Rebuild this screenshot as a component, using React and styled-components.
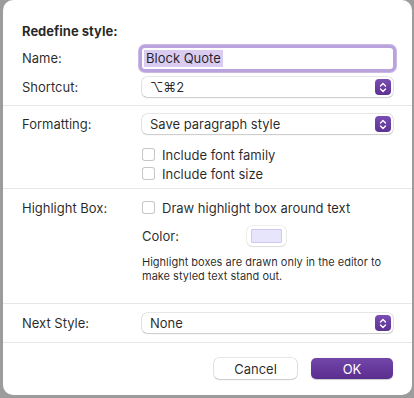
import React from "react";
import styled, { createGlobalStyle } from "styled-components";

const GlobalStyle = createGlobalStyle`
  html, body {
    margin: 0;
    padding: 0;
    background: #9c9c9c;
    font-family: Inter, "Liberation Sans", sans-serif;
    -webkit-font-smoothing: antialiased;
  }
  * { box-sizing: border-box; }
`;

const Backdrop = styled.div`
  width: 414px;
  height: 398px;
  padding: 0 2px 0 3px;
  background: #9c9c9c;
`;

const Dialog = styled.div`
  width: 409px;
  height: 395px;
  background: #ffffff;
  border-radius: 10px;
  display: flex;
  flex-direction: column;
  color: rgba(0, 0, 0, 0.85);
  font-size: 13px;
  overflow: hidden;
`;

const Section = styled.div`
  padding: ${(p) => p.$pad || "0"};
  padding-left: 19px;
  padding-right: 19px;
  display: flex;
  flex-direction: column;
  border-bottom: ${(p) => (p.$last ? "none" : "1px solid #e6e6e6")};
`;

const Title = styled.div`
  height: 20px;
  line-height: 20px;
  font-weight: 700;
  margin-bottom: 4px;
`;

const Row = styled.div`
  display: grid;
  grid-template-columns: 120px 251px;
  align-items: center;
  height: ${(p) => p.$h || 20}px;
  margin-top: ${(p) => p.$mt || 0}px;
`;

const Label = styled.div`
  line-height: 16px;
`;

const TextField = styled.div`
  height: 21px;
  width: 251px;
  background: #fff;
  border-radius: 3px;
  box-shadow: 0 0 0 3px #baa3dd, 0 0 0 4px #c9b8e6;
  padding: 0 2px;
  display: flex;
  align-items: center;
`;

const Selected = styled.span`
  background: #d9ccf0;
  line-height: 17px;
  padding: 0 2px;
`;

const Popup = styled.div`
  height: 20px;
  width: 251px;
  background: #fff;
  border-radius: 5px;
  box-shadow: 0 0 0 0.5px rgba(0, 0, 0, 0.2), 0 1px 1.5px rgba(0, 0, 0, 0.12);
  display: flex;
  align-items: center;
  justify-content: space-between;
  padding: 0 2px 0 8px;
`;

const Stepper = styled.div`
  width: 16px;
  height: 16px;
  border-radius: 4px;
  background: linear-gradient(#7a4db3, #5e3194);
  display: flex;
  align-items: center;
  justify-content: center;
`;

const CheckRow = styled.div`
  display: flex;
  align-items: center;
  gap: 7px;
`;

const Box = styled.span`
  width: 13px;
  height: 13px;
  border-radius: 3px;
  background: #fff;
  box-shadow: inset 0 0 0 1px #c6c6c6;
`;

const ColorRow = styled.div`
  display: grid;
  grid-template-columns: 105px auto;
  align-items: center;
`;

const Swatch = styled.div`
  width: 39px;
  height: 20px;
  border-radius: 5px;
  background: #fff;
  box-shadow: 0 0 0 0.5px rgba(0, 0, 0, 0.12), 0 1px 1.5px rgba(0, 0, 0, 0.08);
  padding: 3px 4px;
`;

const SwatchFill = styled.div`
  width: 100%;
  height: 100%;
  border-radius: 2px;
  background: ${(p) => p.$color};
  box-shadow: inset 0 0 0 0.5px rgba(80, 70, 200, 0.35);
`;

const Help = styled.div`
  margin-left: 120px;
  margin-top: 9px;
  width: 242px;
  font-size: 11px;
  line-height: 14px;
  color: rgba(0, 0, 0, 0.85);
`;

const Footer = styled.div`
  display: flex;
  justify-content: flex-end;
  gap: 14px;
  padding: 15px 19px 0 0;
`;

const Button = styled.button`
  width: ${(p) => p.$w}px;
  height: 21px;
  border: none;
  border-radius: 5px;
  font-family: inherit;
  font-size: 13px;
  padding: 0;
  color: ${(p) => (p.$primary ? "#fff" : "rgba(0,0,0,0.85)")};
  background: ${(p) => (p.$primary ? "linear-gradient(#7147a9, #5b2d8f)" : "#fff")};
  box-shadow: ${(p) =>
    p.$primary
      ? "0 0.5px 1px rgba(0,0,0,0.2)"
      : "0 0 0 0.5px rgba(0,0,0,0.2), 0 1px 1.5px rgba(0,0,0,0.12)"};
`;

function Chevrons() {
  return (
    <svg width="8" height="11" viewBox="0 0 8 11" fill="none">
      <path d="M1.5 4 L4 1.5 L6.5 4" stroke="#fff" strokeWidth="1.4" strokeLinecap="round" strokeLinejoin="round" />
      <path d="M1.5 7 L4 9.5 L6.5 7" stroke="#fff" strokeWidth="1.4" strokeLinecap="round" strokeLinejoin="round" />
    </svg>
  );
}

function PopupButton({ value }) {
  return (
    <Popup>
      <span>{value}</span>
      <Stepper>
        <Chevrons />
      </Stepper>
    </Popup>
  );
}

function Check({ text }) {
  return (
    <CheckRow>
      <Box />
      <span>{text}</span>
    </CheckRow>
  );
}

export default function App() {
  return (
    <Backdrop>
      <GlobalStyle />
      <Dialog>
        <Section $pad="21px 0 8px">
          <Title>Redefine style:</Title>
          <Row $h={26}>
            <Label>Name:</Label>
            <TextField>
              <Selected>Block Quote</Selected>
            </TextField>
          </Row>
          <Row $mt={6}>
            <Label>Shortcut:</Label>
            <PopupButton value="⌥⌘2" />
          </Row>
        </Section>

        <Section $pad="8px 0 5px">
          <Row>
            <Label>Formatting:</Label>
            <PopupButton value="Save paragraph style" />
          </Row>
          <Row $h={19} $mt={11}>
            <span />
            <Check text="Include font family" />
          </Row>
          <Row $h={19}>
            <span />
            <Check text="Include font size" />
          </Row>
        </Section>

        <Section $pad="9px 0 20px">
          <Row $h={19}>
            <Label>Highlight Box:</Label>
            <Check text="Draw highlight box around text" />
          </Row>
          <Row $mt={9}>
            <span />
            <ColorRow>
              <span>Color:</span>
              <Swatch>
                <SwatchFill $color="#e7e5fc" />
              </Swatch>
            </ColorRow>
          </Row>
          <Help>
            Highlight boxes are drawn only in the editor to make styled text stand out.
          </Help>
        </Section>

        <Section $pad="9px 0 9px">
          <Row>
            <Label>Next Style:</Label>
            <PopupButton value="None" />
          </Row>
        </Section>

        <Footer>
          <Button $w={83}>Cancel</Button>
          <Button $w={82} $primary>
            OK
          </Button>
        </Footer>
      </Dialog>
    </Backdrop>
  );
}
